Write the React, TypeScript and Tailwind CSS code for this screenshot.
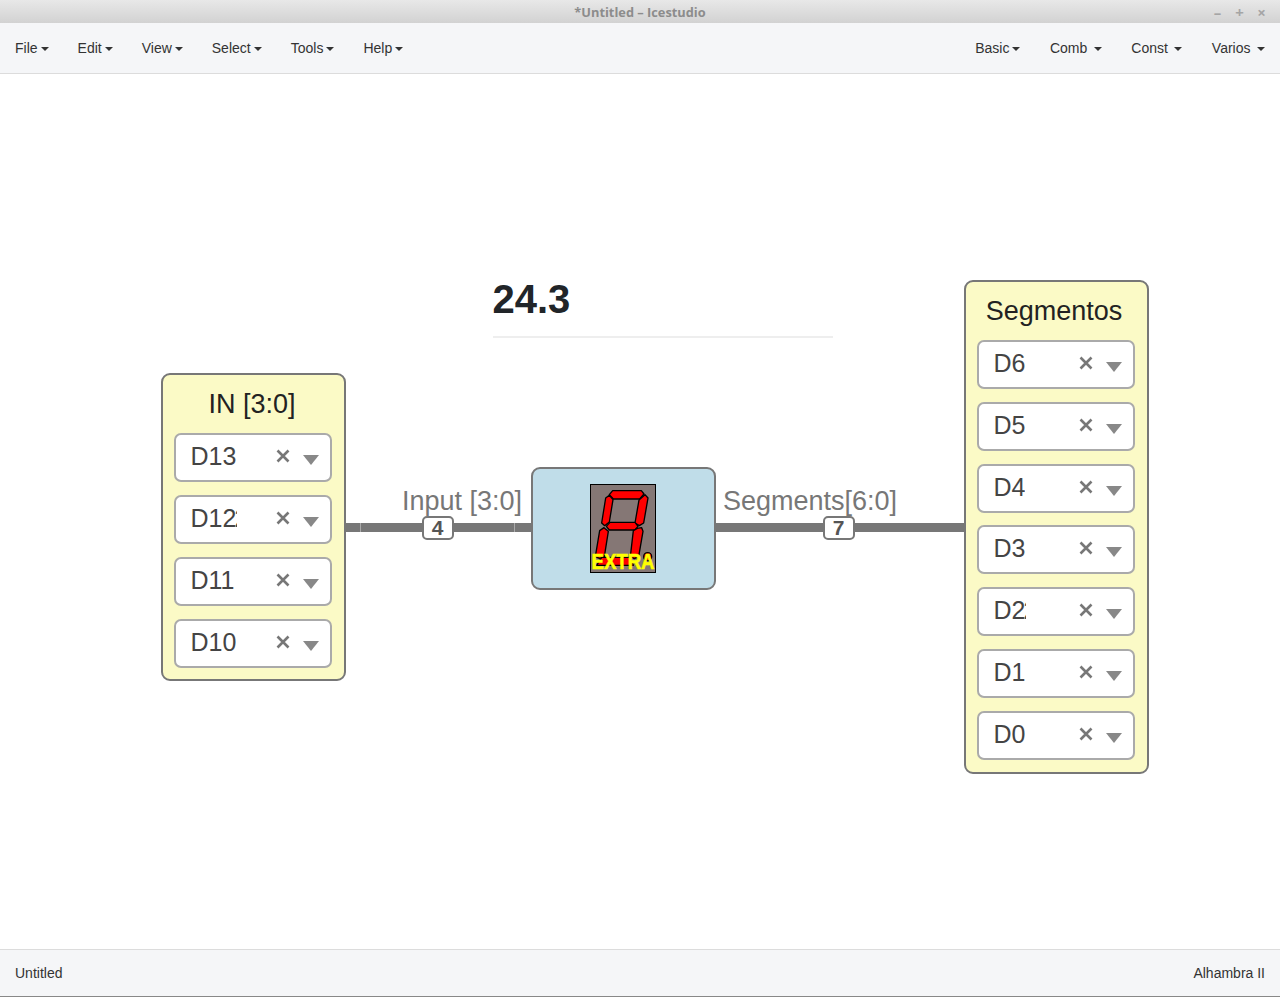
const leftMenu = ["File", "Edit", "View", "Select", "Tools", "Help"];
const rightMenu = ["Basic", "Comb", "Const", "Varios"];

function Caret() {
  return (
    <span className="inline-block w-0 h-0 border-x-[4px] border-x-transparent border-t-[4px] border-t-[#333] translate-y-[1px]" />
  );
}

function MenuItem({ label, wide }: { label: string; wide?: boolean }) {
  return (
    <div className={`flex items-center text-[14px] text-[#333] ${wide ? "gap-[6.5px]" : "gap-[3px]"}`}>
      <span>{label}</span>
      <Caret />
    </div>
  );
}

function PinSelect({ pin, clip, rest }: { pin: string; clip?: string; rest?: string }) {
  return (
    <div className="relative h-[49px] w-[158px] rounded-[7px] border-2 border-[#aaaaaa] bg-white">
      <span className={`absolute left-[15px] top-[4px] overflow-hidden whitespace-nowrap text-[25px] leading-[34px] text-[#444] ${clip ?? ""}`}>
        {pin}
        {/* the long pin name is cut by the select */}
        {rest && <span className="-ml-[2px]">{rest}</span>}
      </span>
      <svg className="absolute left-[100px] top-[14px]" width="14" height="14" viewBox="0 0 14 14">
        <path d="M1.5 1.5 L12.5 12.5 M12.5 1.5 L1.5 12.5" stroke="#777" strokeWidth="2.6" />
      </svg>
      <span className="absolute left-[127px] top-[20px] w-0 h-0 border-x-[8px] border-x-transparent border-t-[10px] border-t-[#888]" />
    </div>
  );
}

function PinBlock({
  title,
  pins,
  className,
  gap,
  titleClass,
}: {
  title: string;
  pins: { pin: string; clip?: string; rest?: string }[];
  className: string;
  gap: string;
  titleClass: string;
}) {
  return (
    <div className={`absolute w-[185px] rounded-[9px] border-[2.5px] border-[#777] bg-[#fbfac6] px-[11px] ${className}`}>
      <div className={`pt-[9px] text-center text-[27px] leading-[40px] text-[#222] ${titleClass}`}>{title}</div>
      <div className={`flex flex-col ${gap}`}>
        {pins.map((p) => (
          <PinSelect key={p.pin} pin={p.pin} clip={p.clip} rest={p.rest} />
        ))}
      </div>
    </div>
  );
}

function Display() {
  return (
    <div className="relative mt-[1px] h-[89px] w-[66px] border border-black bg-[#857775]">
      <svg className="absolute inset-0" width="64" height="87" viewBox="33 21 192 261">
        <g fill="#ff0000" stroke="#000" strokeWidth="4" strokeLinejoin="round">
          <path d="M98 38 L184 38 L192 48 L179 63 L100 63 L88 50 Z" />
          <path d="M195 50 L204 60 L191 135 L178 143 L165 135 L177 66 Z" />
          <path d="M88 52 L99 65 L88 132 L74 143 L65 135 L77 60 Z" />
          <path d="M90 133 L165 133 L174 145 L165 156 L88 156 L79 145 Z" />
          <path d="M72 149 L85 160 L73 236 L60 242 L46 236 L59 158 Z" />
          <path d="M172 151 L185 149 L189 160 L176 236 L163 242 L151 236 L160 158 Z" />
          <path d="M65 238 L150 238 L160 262 L50 262 Z" />
          <circle cx="203" cy="236" r="12" />
        </g>
      </svg>
      <span className="absolute bottom-[-1px] left-0 w-full scale-y-[1.15] text-center text-[18.6px] font-bold leading-[22px] text-[#ffff00] [-webkit-text-stroke:0.5px_#ffff00]">
        EXTRA
      </span>
    </div>
  );
}

export default function App() {
  return (
    <div className="flex h-[997px] w-[1280px] flex-col overflow-hidden bg-white font-['Liberation_Sans',Arial,sans-serif]">
      {/* TITLE BAR */}
      <div className="relative flex h-[23px] items-center justify-center bg-gradient-to-b from-[#e8e8e8] to-[#d2d2d2] pt-[3px]">
        <span className="font-['Open_Sans',sans-serif] text-[12.8px] font-bold text-[#8c8c8c]">*Untitled – Icestudio</span>
        <div className="absolute right-[13px] top-[2px] flex gap-[11px] font-['Open_Sans',sans-serif] text-[15px] font-bold leading-[20px] text-[#a5a5a5]">
          <span className="w-[11px] text-center">–</span>
          <span className="w-[11px] text-center">+</span>
          <span className="w-[11px] text-center">×</span>
        </div>
      </div>

      {/* MENU */}
      <div className="flex h-[51px] items-center justify-between border-b border-[#dcdcdc] bg-[#f5f6f8] px-[15px]">
        <div className="flex gap-[29px]">
          {leftMenu.map((m) => (
            <MenuItem key={m} label={m} />
          ))}
        </div>
        <div className="flex gap-[29.5px]">
          {rightMenu.map((m) => (
            <MenuItem key={m} label={m} wide={m !== "Basic"} />
          ))}
        </div>
      </div>

      {/* CANVAS */}
      <div className="relative flex-1">
        <div className="absolute left-[492.5px] top-[200px] w-[340.5px] border-b-2 border-[#eeeeee] pb-[12px]">
          <h1 className="text-[40px] font-bold leading-[50px] text-[#212529]">24.3</h1>
        </div>

        <PinBlock
          title="IN [3:0]"
          className="left-[160.5px] top-[298.5px] pb-[11.5px]"
          gap="gap-[13px]"
          titleClass="h-[58px] pr-[2px]"
          pins={[
            { pin: "D13" },
            { pin: "D12", clip: "w-[46px]", rest: "2" },
            { pin: "D11" },
            { pin: "D10" },
          ]}
        />
        <PinBlock
          title="Segmentos"
          className="left-[963.5px] top-[205.5px] pb-[12px]"
          gap="gap-[12.83px]"
          titleClass="h-[58.5px] pr-[4px]"
          pins={[
            { pin: "D6" },
            { pin: "D5" },
            { pin: "D4" },
            { pin: "D3" },
            { pin: "D2", clip: "w-[32px]", rest: "2" },
            { pin: "D1" },
            { pin: "D0" },
          ]}
        />

        {/* wires */}
        <div className="absolute left-[345px] top-[449px] h-[9px] w-[186px] bg-[#777]" />
        <div className="absolute left-[360px] top-[449px] h-[9px] w-px bg-[#aaa]" />
        <div className="absolute left-[514px] top-[449px] h-[9px] w-px bg-[#aaa]" />
        <div className="absolute left-[715px] top-[449px] h-[9px] w-[249px] bg-[#777]" />

        <span className="absolute left-[402px] top-[408px] text-[27px] leading-[38px] text-[#777]">Input [3:0]</span>
        <span className="absolute left-[723px] top-[408px] text-[27px] leading-[38px] text-[#777]">Segments[6:0]</span>

        <div className="absolute left-[421.5px] top-[441.5px] flex h-[24px] w-[32px] items-center justify-center rounded-[5px] border-2 border-[#777] bg-white text-[21px] font-bold text-[#555]">4</div>
        <div className="absolute left-[822.5px] top-[441.5px] flex h-[24px] w-[32px] items-center justify-center rounded-[5px] border-2 border-[#777] bg-white text-[21px] font-bold text-[#555]">7</div>

        {/* bloque central */}
        <div className="absolute left-[530.5px] top-[392.5px] flex h-[123px] w-[185px] items-center justify-center rounded-[9px] border-[2.5px] border-[#777] bg-[#c0dde9]">
          <Display />
        </div>
      </div>

      {/* STATUS */}
      <div className="flex h-[48px] items-center justify-between border-y border-t-[#dcdcdc] border-b-[#888] bg-[#f5f6f8] px-[15px] text-[14px] text-[#333]">
        <span>Untitled</span>
        <span>Alhambra II</span>
      </div>
    </div>
  );
}
